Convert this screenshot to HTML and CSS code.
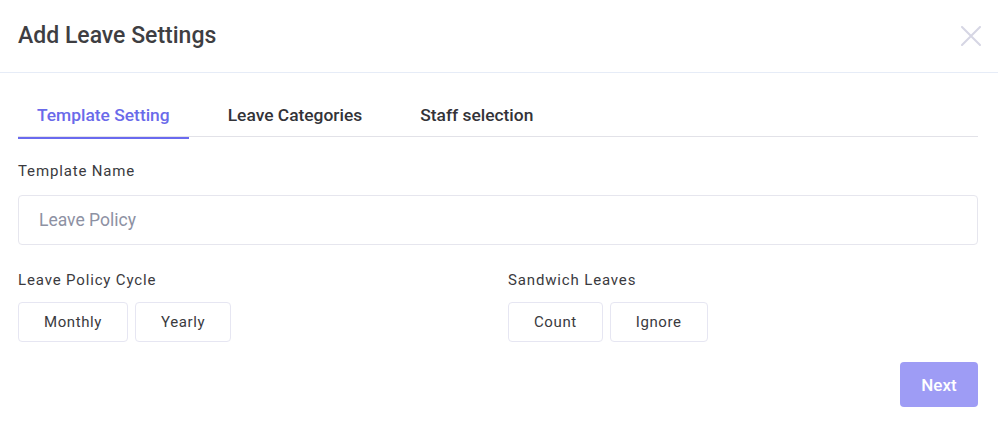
FILE: index.html
```html
<!DOCTYPE html>
<html lang="en">
<head>
<meta charset="utf-8">
<title>Add Leave Settings</title>
<link rel="stylesheet" href="styles.css">
</head>
<body>
<div class="modal">
  <header class="modal-header">
    <h1 class="modal-title">Add Leave Settings</h1>
    <button class="close" aria-label="Close">
      <svg width="20" height="20" viewBox="0 0 20 20"><path d="M1 1L19 19M19 1L1 19" stroke="#d6d6e4" stroke-width="2" stroke-linecap="round"/></svg>
    </button>
  </header>
  <div class="modal-body">
    <nav class="tabs">
      <div class="tab active">Template Setting</div>
      <div class="tab">Leave Categories</div>
      <div class="tab">Staff selection</div>
    </nav>
    <div class="field">
      <label class="label">Template Name</label>
      <input class="input" type="text" placeholder="Leave Policy">
    </div>
    <div class="cols">
      <div class="field">
        <label class="label">Leave Policy Cycle</label>
        <div class="options">
          <button class="opt">Monthly</button>
          <button class="opt">Yearly</button>
        </div>
      </div>
      <div class="field">
        <label class="label">Sandwich Leaves</label>
        <div class="options">
          <button class="opt">Count</button>
          <button class="opt">Ignore</button>
        </div>
      </div>
    </div>
    <div class="footer">
      <button class="next">Next</button>
    </div>
  </div>
</div>
</body>
</html>
```
FILE: styles.css
```css
* { box-sizing: border-box; }
html, body { margin: 0; padding: 0; background: #fff; }
body { font-family: Roboto, "Noto Sans", sans-serif; }

.modal { width: 998px; }

.modal-header {
  height: 73px;
  border-bottom: 1px solid #e6ecf7;
  display: flex;
  align-items: center;
  justify-content: space-between;
  padding: 0 17px 0 18px;
}
.modal-title {
  margin: 0;
  font-size: 23px;
  font-weight: 500;
  color: #3e3e42;
  padding-bottom: 2px;
}
.close {
  border: 0;
  background: none;
  padding: 0;
  width: 20px;
  height: 20px;
  display: flex;
}

.modal-body { padding: 21px 20px 0 18px; }

.tabs {
  display: flex;
  gap: 20px;
  border-bottom: 1px solid #e2e2e8;
}
.tab {
  position: relative;
  padding: 11px 19px 11px;
  font-size: 17.4px;
  line-height: 20px;
  font-weight: 500;
  color: #333338;
}
.tab.active { color: #6a6aea; }
.tab.active::after {
  content: "";
  position: absolute;
  left: 0;
  right: 0;
  bottom: -3px;
  height: 2px;
  background: #6a6aef;
}

.field { display: flex; flex-direction: column; }
.modal-body > .field { margin-top: 25px; }

.label {
  font-family: Roboto, sans-serif;
  font-size: 15px;
  line-height: 18px;
  color: #3a3a3e;
  letter-spacing: 0.85px;
  margin-bottom: 15px;
}
.input {
  height: 50px;
  border: 1px solid #e6e6ee;
  border-radius: 4px;
  padding: 0 20px;
  font-family: Roboto, sans-serif;
  font-size: 17.5px;
  color: #333;
  outline: none;
}
.input::placeholder { color: #8d91a3; }

.cols {
  display: grid;
  grid-template-columns: 1fr 1fr;
  column-gap: 20px;
  margin-top: 26px;
}
.cols .label { margin-bottom: 13px; }
.options { display: flex; gap: 7px; }
.opt {
  height: 40px;
  padding: 0 25px;
  background: #fff;
  border: 1px solid #e6e6f2;
  border-radius: 4px;
  font-family: Roboto, sans-serif;
  font-size: 15px;
  color: #3a3a3e;
  letter-spacing: 0.6px;
}

.footer {
  display: flex;
  justify-content: flex-end;
  margin-top: 20px;
}
.next {
  width: 78px;
  height: 45px;
  border: 0;
  border-radius: 4px;
  background: #9e9cf5;
  color: #fff;
  font-family: Roboto, sans-serif;
  font-size: 17px;
  font-weight: 500;
}
```
